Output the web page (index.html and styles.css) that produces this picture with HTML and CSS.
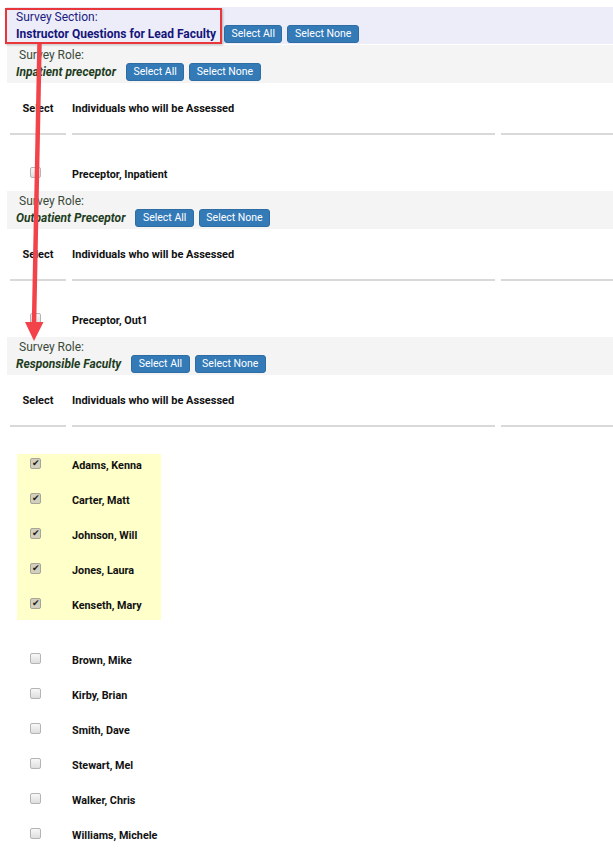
FILE: index.html
```html
<!DOCTYPE html>
<html>
<head>
<meta charset="utf-8">
<link rel="stylesheet" href="styles.css">
</head>
<body>
<div class="page">
  <div class="section-head">
    <div class="section-label">Survey Section:</div>
    <div class="head-row">
      <span class="section-title">Instructor Questions for Lead Faculty</span>
      <button class="btn">Select All</button>
      <button class="btn">Select None</button>
    </div>
  </div>

  <div class="role">
    <div class="role-head">
      <div class="role-label">Survey Role:</div>
      <div class="head-row">
        <span class="role-title">Inpatient preceptor</span>
        <button class="btn">Select All</button>
        <button class="btn">Select None</button>
      </div>
    </div>
    <div class="thead">
      <div class="th th-select">Select</div>
      <div class="th">Individuals who will be Assessed</div>
      <div class="th"></div>
    </div>
    <div class="group single">
      <div class="row"><span class="cb"></span><span class="name">Preceptor, Inpatient</span></div>
    </div>
  </div>

  <div class="role">
    <div class="role-head">
      <div class="role-label">Survey Role:</div>
      <div class="head-row">
        <span class="role-title">Outpatient Preceptor</span>
        <button class="btn">Select All</button>
        <button class="btn">Select None</button>
      </div>
    </div>
    <div class="thead">
      <div class="th th-select">Select</div>
      <div class="th">Individuals who will be Assessed</div>
      <div class="th"></div>
    </div>
    <div class="group single">
      <div class="row"><span class="cb"></span><span class="name">Preceptor, Out1</span></div>
    </div>
  </div>

  <div class="role">
    <div class="role-head">
      <div class="role-label">Survey Role:</div>
      <div class="head-row">
        <span class="role-title">Responsible Faculty</span>
        <button class="btn">Select All</button>
        <button class="btn">Select None</button>
      </div>
    </div>
    <div class="thead">
      <div class="th th-select">Select</div>
      <div class="th">Individuals who will be Assessed</div>
      <div class="th"></div>
    </div>
    <div class="group highlight">
      <div class="row"><span class="cb checked"></span><span class="name">Adams, Kenna</span></div>
      <div class="row"><span class="cb checked"></span><span class="name">Carter, Matt</span></div>
      <div class="row"><span class="cb checked"></span><span class="name">Johnson, Will</span></div>
      <div class="row"><span class="cb checked"></span><span class="name">Jones, Laura</span></div>
      <div class="row"><span class="cb checked"></span><span class="name">Kenseth, Mary</span></div>
    </div>
    <div class="group rest">
      <div class="row"><span class="cb"></span><span class="name">Brown, Mike</span></div>
      <div class="row"><span class="cb"></span><span class="name">Kirby, Brian</span></div>
      <div class="row"><span class="cb"></span><span class="name">Smith, Dave</span></div>
      <div class="row"><span class="cb"></span><span class="name">Stewart, Mel</span></div>
      <div class="row"><span class="cb"></span><span class="name">Walker, Chris</span></div>
      <div class="row"><span class="cb"></span><span class="name">Williams, Michele</span></div>
    </div>
  </div>
</div>

<div class="callout-box"></div>
<svg class="callout-arrow" width="613" height="864" viewBox="0 0 613 864">
  <line x1="39.5" y1="44" x2="34" y2="324" stroke="#f2434a" stroke-width="4.5"/>
  <polygon points="25,322 43.5,322 34,341" fill="#f2434a"/>
</svg>
</body>
</html>
```
FILE: styles.css
```css
html, body {
  margin: 0;
  padding: 0;
  background: #ffffff;
}
body {
  font-family: Roboto, "Liberation Sans", Arial, sans-serif;
  position: relative;
  width: 613px;
  height: 864px;
  overflow: hidden;
}
.page {
  padding-top: 7px;
}
.section-head {
  margin-left: 6px;
  background: #ededf9;
  padding: 2px 0 1px 10px;
  height: 34px;
}
.section-label {
  font-size: 12px;
  line-height: 16px;
  color: #1b1b80;
}
.head-row {
  display: flex;
  align-items: center;
  height: 18px;
}
.section-title {
  font-size: 12px;
  font-weight: bold;
  color: #15157a;
  margin-right: 8px;
}
.btn {
  font-family: Roboto, "Liberation Sans", Arial, sans-serif;
  font-size: 10.5px;
  height: 18px;
  padding: 0 6.5px;
  margin: 0 5px 0 0;
  background: #337ab7;
  border: 1px solid #2e6da4;
  border-radius: 3px;
  color: #ffffff;
  line-height: 16px;
}
.role-head {
  margin-left: 7px;
  margin-top: 1px;
  background: #f4f4f4;
  padding: 2px 0 2px 9px;
  height: 34px;
}
.role-label {
  font-size: 12px;
  line-height: 16px;
  color: #3a4a3a;
  padding-left: 3px;
}
.role-title {
  font-size: 12px;
  font-weight: bold;
  font-style: italic;
  color: #1e3d1e;
  margin-right: 10px;
}
.role + .role .role-head {
  margin-top: 6px;
}
.thead {
  display: grid;
  grid-template-columns: 56px 423px 112px;
  column-gap: 6px;
  margin-left: 10px;
}
.th {
  height: 50px;
  border-bottom: 2px solid #d9d9d9;
  display: flex;
  align-items: center;
  font-size: 11px;
  font-weight: bold;
  color: #111111;
}
.th-select {
  justify-content: center;
}
.group {
  margin-left: 17px;
  display: flex;
  flex-direction: column;
  gap: 13px;
}
.single {
  margin-top: 28px;
}
.highlight {
  margin-top: 27px;
  width: 144px;
  background: #ffffc9;
  padding-bottom: 4px;
}
.rest {
  margin-top: 29px;
}
.row {
  height: 22px;
  display: flex;
  align-items: flex-start;
}
.cb {
  width: 9px;
  height: 9px;
  margin: 4px 0 0 13px;
  border: 1px solid #b4b4b4;
  border-radius: 2px;
  background: linear-gradient(#f8f8f8, #dedede);
  flex: none;
  position: relative;
}
.cb.checked {
  background: #d2cfbe;
  border-color: #a9a594;
}
.cb.checked::after {
  content: "\2714";
  position: absolute;
  left: 1px;
  top: -2px;
  font-size: 9px;
  line-height: 12px;
  color: #222;
}
.name {
  margin-left: 31px;
  padding-top: 2px;
  font-size: 10.8px;
  font-weight: bold;
  line-height: 20px;
  color: #111111;
}
.callout-box {
  position: absolute;
  left: 5px;
  top: 8px;
  width: 213px;
  height: 32px;
  border: 2px solid #e8363b;
  box-shadow: 1px 1px 2px rgba(0,0,0,0.25);
}
.callout-arrow {
  position: absolute;
  left: 0;
  top: 0;
  pointer-events: none;
}
```
